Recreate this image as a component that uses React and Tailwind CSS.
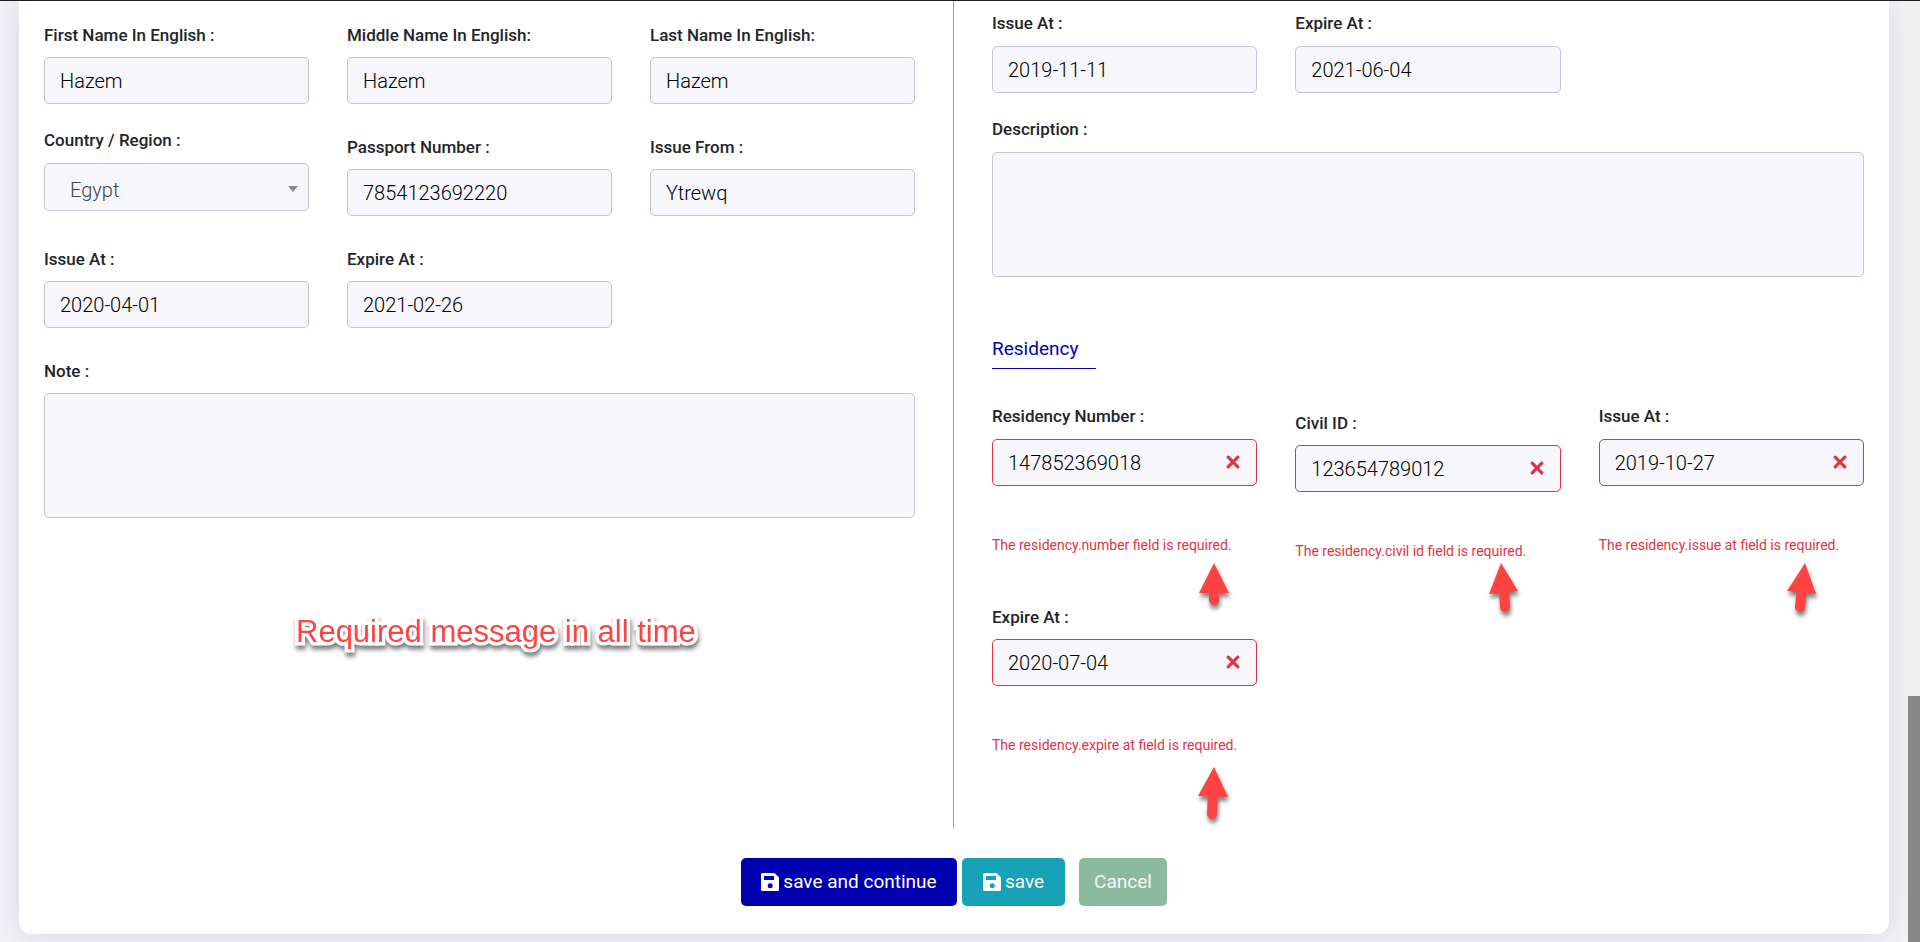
import { useId } from "react";

const boxBase =
  "block w-full rounded-[5px] border bg-[#f6f6fb] pl-[15px] text-xl font-light text-black outline-none";

const labelBase = "block text-[17px] leading-7 font-medium text-[#212529] ";

function Field({ label, value, error, dense, children }) {
  const id = useId();
  return (
    <div className={dense ? "" : "pt-[7px]"}>
      <label htmlFor={id} className={labelBase + (dense ? "mb-[9px]" : "mb-2")}>
        {label}
      </label>
      <div className="relative">
        <input
          id={id}
          type="text"
          defaultValue={value}
          aria-invalid={error ? true : undefined}
          className={
            boxBase + " h-[47px] " + (error ? "border-[#dc3545] pr-11" : "border-[#c5c3dd] pr-4")
          }
        />
        {error && (
          <svg
            aria-hidden="true"
            viewBox="0 0 14 14"
            className="pointer-events-none absolute top-4 right-4 h-[14px] w-4"
          >
            <path d="M2.2 2.2 11.8 11.8M11.8 2.2 2.2 11.8" stroke="#dc3545" strokeWidth="3.2" strokeLinecap="round" />
          </svg>
        )}
      </div>
      {error && (
        <div className="relative mt-[49px]">
          <p className="text-sm leading-5 whitespace-nowrap text-[#dc3545]">{error}</p>
          {children}
        </div>
      )}
    </div>
  );
}

function SelectField({ label, value }) {
  const id = useId();
  return (
    <div>
      <label htmlFor={id} className={labelBase + "mb-[9px]"}>
        {label}
      </label>
      <div className="relative">
        <select
          id={id}
          defaultValue={value}
          className="block h-12 w-full appearance-none rounded-[5px] border border-[#c5c3dd] bg-[#f6f6fb] pt-1.5 pr-10 pl-[25px] text-xl font-light text-[#444] outline-none"
        >
          <option>{value}</option>
        </select>
        <svg
          aria-hidden="true"
          viewBox="0 0 10 6"
          className="pointer-events-none absolute top-[23px] right-[11px] h-1.5 w-2.5"
        >
          <path d="M0 0h10L5 6z" fill="#888" />
        </svg>
      </div>
    </div>
  );
}

function AreaField({ label, dense }) {
  const id = useId();
  return (
    <div className={dense ? "" : "pt-[7px]"}>
      <label htmlFor={id} className={labelBase + (dense ? "mb-[9px]" : "mb-2")}>
        {label}
      </label>
      <textarea id={id} className={boxBase + " h-[125px] resize-none border-[#c5c3dd]"} />
    </div>
  );
}

function Arrow({ className, head, tail }) {
  return (
    <svg
      aria-hidden="true"
      viewBox="0 0 32 56"
      className={
        "pointer-events-none absolute h-14 w-8 overflow-visible drop-shadow-[1px_4px_2px_rgba(0,0,0,0.5)] " +
        className
      }
    >
      <path d={head} fill="#ff4343" />
      <path d={tail} stroke="#ff4343" strokeWidth="10" strokeLinecap="round" />
    </svg>
  );
}

function SaveIcon() {
  return (
    <svg aria-hidden="true" viewBox="0 0 18 18" className="h-[18px] w-[18px]">
      <path
        fill="currentColor"
        fillRule="evenodd"
        d="M1.5 0h12L18 4.5V16.5A1.5 1.5 0 0 1 16.5 18H1.5A1.5 1.5 0 0 1 0 16.5V1.5A1.5 1.5 0 0 1 1.5 0zM3 3v4h10V3zM9.2 10.2a2.5 2.5 0 1 0 0 5 2.5 2.5 0 0 0 0-5z"
      />
    </svg>
  );
}

export default function App() {
  return (
    <div className="flex min-h-screen overflow-hidden border-t border-[#1f1b20] bg-[#f2f2f7] font-['Roboto',sans-serif]">
      <main className="min-w-0 flex-1 px-[19px] pb-[7px]">
        <form
          onSubmit={(e) => e.preventDefault()}
          className="rounded-b-xl bg-white px-[25px] pb-7 shadow-[0_0_30px_rgba(60,55,80,0.15)]"
        >
          <div className="grid grid-cols-2">
            <section className="relative border-r border-[#9796a5] pt-[13px] pr-[38px]">
              <div className="grid grid-cols-3 items-start gap-x-[38px] gap-y-[22px]">
                <Field label="First Name In English :" value="Hazem" />
                <Field label="Middle Name In English:" value="Hazem" />
                <Field label="Last Name In English:" value="Hazem" />
                <SelectField label="Country / Region :" value="Egypt" />
                <Field label="Passport Number :" value="7854123692220" />
                <Field label="Issue From :" value="Ytrewq" />
                <Field label="Issue At :" value="2020-04-01" />
                <Field label="Expire At :" value="2021-02-26" />
                <div className="col-span-3">
                  <AreaField label="Note :" />
                </div>
              </div>
              <p className="pointer-events-none absolute top-[611px] left-[252px] font-['Liberation_Sans',sans-serif] text-[31px] leading-10 whitespace-nowrap text-[#ff4343] drop-shadow-[1px_4px_2px_rgba(0,0,0,0.5)] [-webkit-text-stroke:7px_white] [paint-order:stroke_fill]">
                Required message in all time
              </p>
            </section>

            <section className="pt-2 pb-[73px] pl-[38px]">
              <div className="grid grid-cols-3 items-start gap-x-[38px] gap-y-[22px]">
                <Field dense label="Issue At :" value="2019-11-11" />
                <Field dense label="Expire At :" value="2021-06-04" />
                <div className="col-span-3">
                  <AreaField dense label="Description :" />
                </div>
              </div>

              <h2 className="mt-[58px] mb-[33px] w-[104px] border-b border-[#0000ae] pb-[5px] text-[19px] leading-7 text-[#0000ae]">
                Residency
              </h2>

              <div className="grid grid-cols-3 items-start gap-x-[38px] gap-y-[35px]">
                <Field
                  dense
                  label="Residency Number :"
                  value="147852369018"
                  error="The residency.number field is required."
                >
                  <Arrow className="top-7 left-[206px]" head="M16 0 1 30H31Z" tail="M16 25V37" />
                </Field>
                <Field
                  label="Civil ID :"
                  value="123654789012"
                  error="The residency.civil id field is required."
                >
                  <Arrow className="top-[22px] left-[193px]" head="M13 0 1 31 30 28Z" tail="M16 25 17 44" />
                </Field>
                <Field
                  dense
                  label="Issue At :"
                  value="2019-10-27"
                  error="The residency.issue at field is required."
                >
                  <Arrow className="top-7 left-[187px]" head="M19 0 1 28 30 31Z" tail="M16 25 14 44" />
                </Field>
                <Field
                  label="Expire At :"
                  value="2020-07-04"
                  error="The residency.expire at field is required."
                >
                  <Arrow className="top-8 left-[205px]" head="M17 0 1 29 31 30Z" tail="M16 25 15 47" />
                </Field>
              </div>
            </section>
          </div>

          <div className="mt-[30px] flex justify-center text-[19px] text-white">
            <button
              type="submit"
              className="flex h-12 w-[216px] items-center justify-center gap-1 rounded-[5px] bg-[#0000ae]"
            >
              <SaveIcon />
              save and continue
            </button>
            <button
              type="submit"
              className="ml-[5px] flex h-12 w-[103px] items-center justify-center gap-1 rounded-[5px] bg-[#17a2b8]"
            >
              <SaveIcon />
              save
            </button>
            <button type="button" className="ml-[14px] h-12 w-[88px] rounded-[5px] bg-[#8bba9f] text-white/90">
              Cancel
            </button>
          </div>
        </form>
      </main>
      <div aria-hidden="true" className="relative z-10 flex w-3 flex-col justify-end bg-[#f0f0f0]">
        <div className="h-[246px] bg-[#888]" />
      </div>
    </div>
  );
}
